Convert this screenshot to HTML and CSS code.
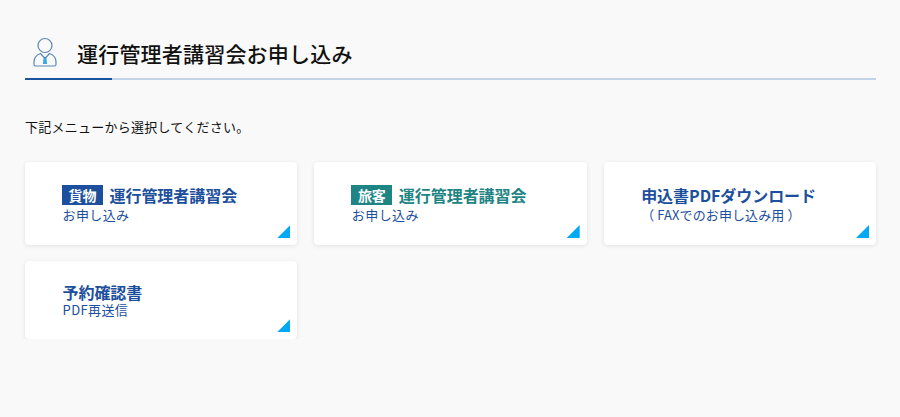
FILE: index.html
```html
<!DOCTYPE html>
<html lang="ja">
<head>
<meta charset="utf-8">
<title>運行管理者講習会お申し込み</title>
<link rel="stylesheet" href="styles.css">
</head>
<body>
<main class="page">
  <header class="head">
    <svg class="head-icon" width="24" height="30" viewBox="0 0 24 30" fill="none">
      <circle cx="12" cy="8.5" r="7" stroke="#5a86b8" stroke-width="1.2"/>
      <path d="M7.500 16.500 C3 18 1 20.500 1 25 V27.500 Q1 29 2.500 29 H21.500 Q23 29 23 27.500 V25 C23 20.500 21 18 16.500 16.500 L12 21.500Z" stroke="#5a86b8" stroke-width="1.2"/>
      <path d="M10.500 21 H13.500 L14 27 H10Z" fill="#35a9e0"/>
    </svg>
    <h1 class="title">運行管理者講習会お申し込み</h1>
  </header>
  <p class="lead">下記メニューから選択してください。</p>
  <div class="cards">
    <a class="card">
      <div class="card-title"><span class="badge">貨物</span>運行管理者講習会</div>
      <div class="card-sub">お申し込み</div>
    </a>
    <a class="card">
      <div class="card-title teal"><span class="badge badge-teal">旅客</span>運行管理者講習会</div>
      <div class="card-sub">お申し込み</div>
    </a>
    <a class="card">
      <div class="card-title">申込書PDFダウンロード</div>
      <div class="card-sub card-sub-tight">（ FAXでのお申し込み用 ）</div>
    </a>
    <a class="card card-short">
      <div class="card-title">予約確認書</div>
      <div class="card-sub">PDF再送信</div>
    </a>
  </div>
</main>
</body>
</html>
```
FILE: styles.css
```css
* { box-sizing: border-box; }
html, body { margin: 0; padding: 0; }
body {
  background: #f9f9f9;
  color: #111;
  font-family: "Noto Sans CJK JP", "Noto Sans", sans-serif;
}
.page { padding: 35px 24px 0 25px; }
.head {
  display: flex;
  align-items: center;
  height: 45px;
  padding-left: 8px;
  border-bottom: 2px solid #c3d2e4;
  position: relative;
}
.head::after {
  content: "";
  position: absolute;
  left: 0;
  bottom: -2px;
  width: 87px;
  height: 2px;
  background: #1c539f;
}
.head-icon { flex: none; margin-right: 20px; margin-top: -9px; }
.title { margin: -7px 0 0; font-size: 21px; font-weight: 500; letter-spacing: 0.2px; line-height: 30px; }
.lead { margin: 37px 0 0; font-size: 13px; letter-spacing: 0.25px; line-height: 20px; }
.cards {
  display: grid;
  grid-template-columns: repeat(3, 1fr);
  gap: 16px 17px;
  margin-top: 25px;
}
.card {
  position: relative;
  display: block;
  height: 83px;
  padding: 22px 16px 0 37.5px;
  background: #fff;
  border-radius: 4px;
  box-shadow: 0 1px 4px rgba(0, 0, 0, 0.1);
  color: #1c4f9c;
}
.card::after {
  content: "";
  position: absolute;
  right: 7px;
  bottom: 7px;
  width: 13px;
  height: 13px;
  background: #03a9f4;
  clip-path: polygon(100% 0, 100% 100%, 0 100%);
}
.card-short { height: 78px; padding-top: 20px; }
.card-title { display: flex; align-items: center; font-size: 16px; font-weight: 700; letter-spacing: -0.05px; line-height: 22px; }
.teal { color: #1e8484; }
.badge {
  width: 41px;
  height: 20px;
  margin-left: -0.5px;
  margin-right: 6.5px;
  background: #1c4f9c;
  color: #fff;
  font-size: 14px;
  line-height: 20px;
  text-align: center;
}
.badge-teal { background: #1e8484; }
.card-sub { font-size: 13px; letter-spacing: 0.4px; line-height: 18px; }
.card-sub-tight { letter-spacing: 0.1px; }
.card-short .card-sub { margin-top: -2px; }
```
